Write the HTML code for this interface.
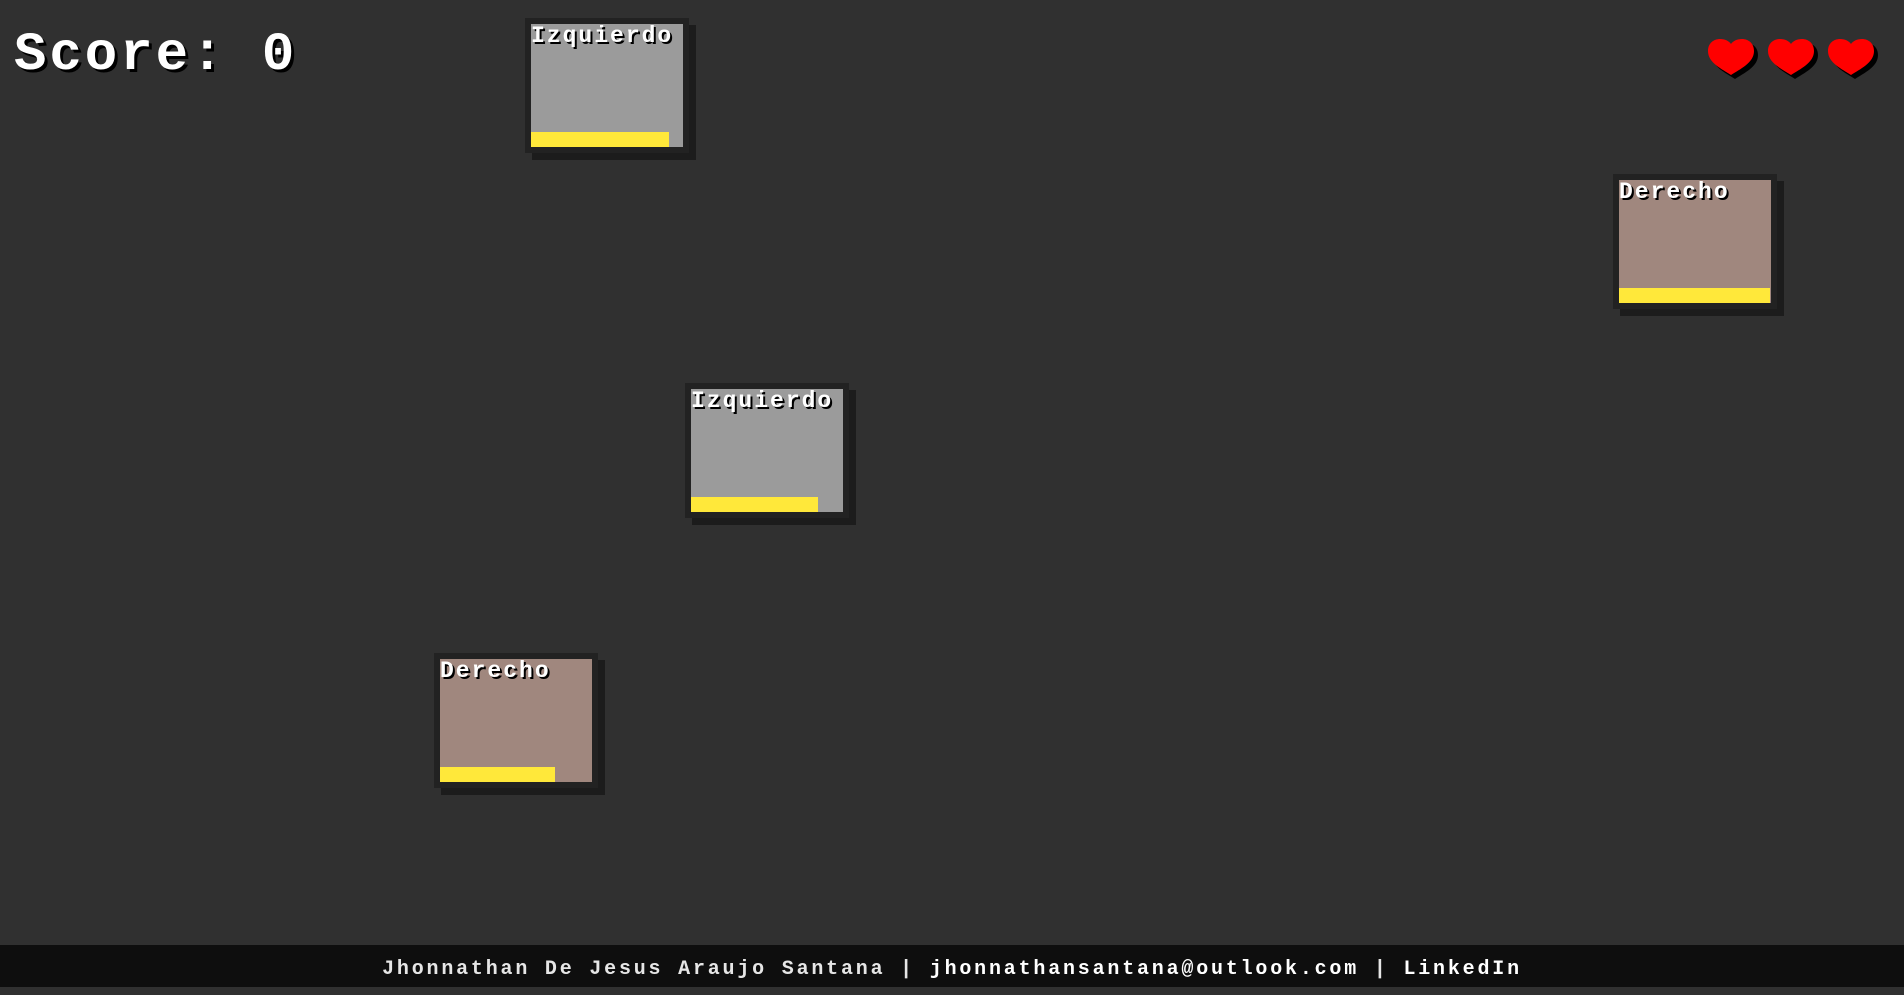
<!DOCTYPE html>
<html><head><meta charset="utf-8"><style>
html,body{margin:0;padding:0;width:1904px;height:987px;overflow:hidden;background:#303030;font-family:"Liberation Mono",monospace;}
.score{position:absolute;left:14px;top:25px;color:#fff;font-weight:bold;font-size:54px;letter-spacing:3px;text-shadow:3px 3px 0 #000;line-height:62px;}
.card{position:absolute;width:152px;height:123px;background:#9b9b9b;border:6px solid #222;box-shadow:7px 7px 0 #1c1c1c;}
.card.d{background:#a0877e;}
.card .t{position:absolute;left:0;top:0px;color:#fff;font-weight:bold;font-size:23px;letter-spacing:2px;text-shadow:2px 2px 0 #000;line-height:24px;white-space:nowrap;}
.card .b{position:absolute;left:0;bottom:0;height:15px;background:#ffe83a;}
.hearts{position:absolute;top:39px;left:1708px;}
.hearts svg{position:absolute;top:0;}
.foot{position:absolute;left:0;top:945px;width:1904px;height:42px;background:#0e0e0e;color:#e6e6e6;font-size:20px;font-weight:bold;letter-spacing:2.8px;text-align:center;line-height:50px;white-space:nowrap;}
</style></head><body>
<div class="score">Score: 0</div>
<div class="card" style="left:525px;top:18px"><div class="t">Izquierdo</div><div class="b" style="width:138px"></div></div>
<div class="card d" style="left:1613px;top:174px"><div class="t">Derecho</div><div class="b" style="width:151px"></div></div>
<div class="card" style="left:685px;top:383px"><div class="t">Izquierdo</div><div class="b" style="width:127px"></div></div>
<div class="card d" style="left:434px;top:653px"><div class="t">Derecho</div><div class="b" style="width:115px"></div></div>
<div class="hearts">
<svg style="left:0" width="54" height="42" viewBox="0 0 54 42"><path transform="translate(4,4)" d="M23 36 C14 30 0 24 0 12 C0 4 6 0 12 0 C17 0 21 2 23 5 C25 2 29 0 34 0 C40 0 46 4 46 12 C46 24 32 30 23 36Z" fill="#000"/><path d="M23 36 C14 30 0 24 0 12 C0 4 6 0 12 0 C17 0 21 2 23 5 C25 2 29 0 34 0 C40 0 46 4 46 12 C46 24 32 30 23 36Z" fill="#f00"/></svg>
<svg style="left:60px" width="54" height="42" viewBox="0 0 54 42"><path transform="translate(4,4)" d="M23 36 C14 30 0 24 0 12 C0 4 6 0 12 0 C17 0 21 2 23 5 C25 2 29 0 34 0 C40 0 46 4 46 12 C46 24 32 30 23 36Z" fill="#000"/><path d="M23 36 C14 30 0 24 0 12 C0 4 6 0 12 0 C17 0 21 2 23 5 C25 2 29 0 34 0 C40 0 46 4 46 12 C46 24 32 30 23 36Z" fill="#f00"/></svg>
<svg style="left:120px" width="54" height="42" viewBox="0 0 54 42"><path transform="translate(4,4)" d="M23 36 C14 30 0 24 0 12 C0 4 6 0 12 0 C17 0 21 2 23 5 C25 2 29 0 34 0 C40 0 46 4 46 12 C46 24 32 30 23 36Z" fill="#000"/><path d="M23 36 C14 30 0 24 0 12 C0 4 6 0 12 0 C17 0 21 2 23 5 C25 2 29 0 34 0 C40 0 46 4 46 12 C46 24 32 30 23 36Z" fill="#f00"/></svg>
</div>
<div class="foot">Jhonnathan De Jesus Araujo Santana | <span style="color:#fff">jhonnathansantana@outlook.com</span> | <span style="color:#fff">LinkedIn</span></div>
</body></html>
